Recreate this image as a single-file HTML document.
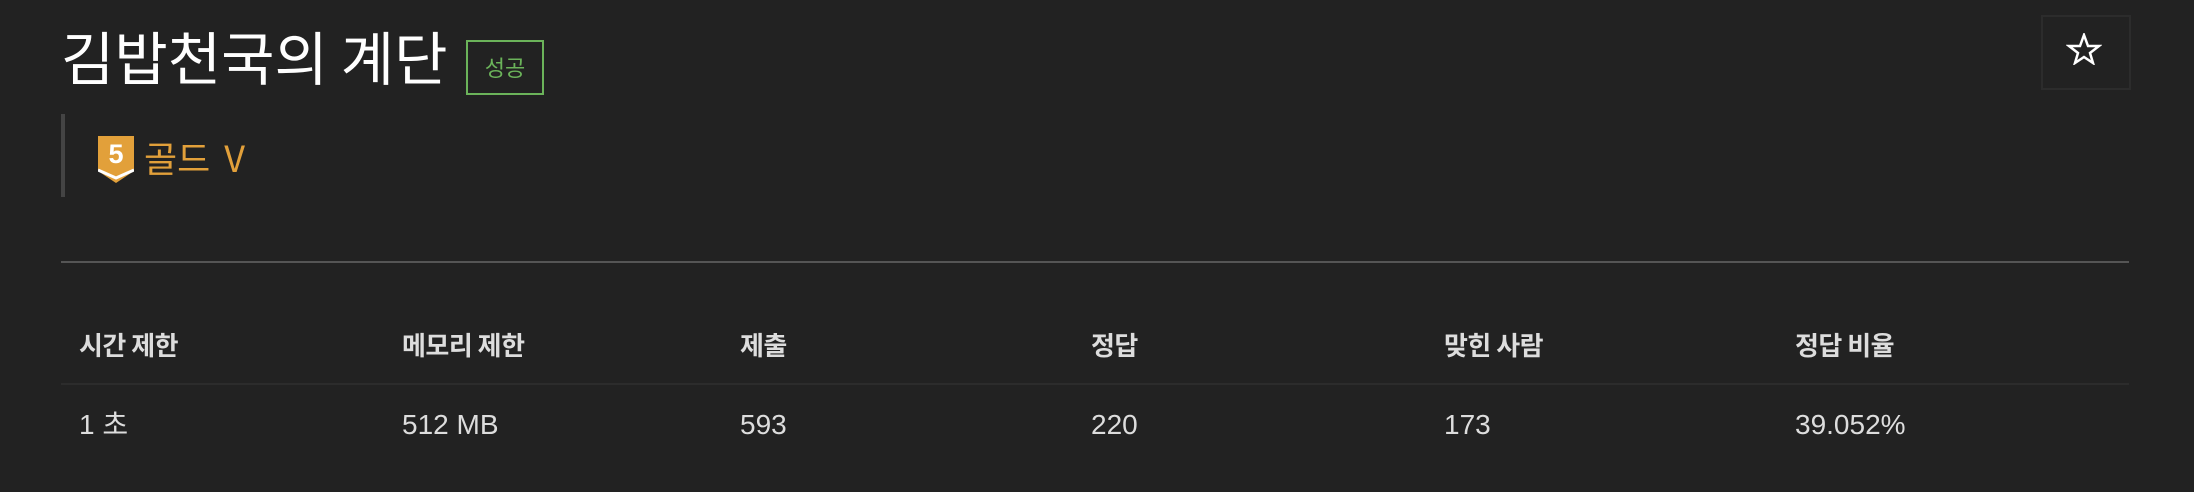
<!DOCTYPE html>
<html><head><meta charset="utf-8"><style>
html,body{margin:0;padding:0;background:#222;width:2194px;height:492px;overflow:hidden;position:relative;font-family:"Liberation Sans","Noto Sans CJK KR",sans-serif;}
.a{position:absolute;white-space:nowrap;line-height:1}
.h{font-family:"Noto Sans CJK KR",sans-serif;font-weight:bold;font-size:26px;color:#ddd;top:332px;letter-spacing:-0.5px}
.d{font-family:"Liberation Sans","Noto Sans CJK KR",sans-serif;font-size:28px;color:#ddd;top:411px}
</style></head><body>
<div class="a" style="left:61px;top:26px;font-family:'Noto Sans CJK KR',sans-serif;font-size:58px;color:#fff">김밥천국의 계단</div>
<div class="a" style="left:466px;top:40px;width:74px;height:51px;border:2px solid #6bb35a;color:#6bb35a;font-family:'Noto Sans CJK KR',sans-serif;font-size:22px;text-align:center;line-height:51px">성공</div>
<div class="a" style="left:2041px;top:15px;width:86px;height:71px;border:2px solid #2c2c2c"></div>
<svg class="a" style="left:2066px;top:33px" width="36" height="32" viewBox="0 0 36 32"><polygon points="18,2 22,13 33,13 24,20 27,30 18,24 9,30 12,20 3,13 14,13" fill="none" stroke="#fff" stroke-width="2.5" stroke-linejoin="miter"/></svg>
<div class="a" style="left:61px;top:114px;width:4px;height:83px;background:#444"></div>
<svg class="a" style="left:98px;top:136px" width="36" height="47" viewBox="0 0 36 47"><polygon points="0,0 36,0 36,35 18,47 0,35" fill="#e2a03a"/><polyline points="0,34 18,42 36,34" fill="none" stroke="#fff" stroke-width="3"/><text x="18" y="27" fill="#fff" font-family="Liberation Sans,sans-serif" font-weight="bold" font-size="27" text-anchor="middle">5</text></svg>
<div class="a" style="left:144px;top:139px;font-family:'Noto Sans CJK KR',sans-serif;font-size:36px;color:#e2a03a;word-spacing:6px">골드 V</div>
<div class="a" style="left:61px;top:261px;width:2068px;height:2px;background:#555"></div>
<div class="a h" style="left:79px">시간 제한</div>
<div class="a h" style="left:402px">메모리 제한</div>
<div class="a h" style="left:740px">제출</div>
<div class="a h" style="left:1091px">정답</div>
<div class="a h" style="left:1444px">맞힌 사람</div>
<div class="a h" style="left:1795px">정답 비율</div>
<div class="a" style="left:61px;top:383px;width:2068px;height:2px;background:#2c2c2c"></div>
<div class="a d" style="left:79px">1 초</div>
<div class="a d" style="left:402px">512 MB</div>
<div class="a d" style="left:740px">593</div>
<div class="a d" style="left:1091px">220</div>
<div class="a d" style="left:1444px">173</div>
<div class="a d" style="left:1795px">39.052%</div>
</body></html>
